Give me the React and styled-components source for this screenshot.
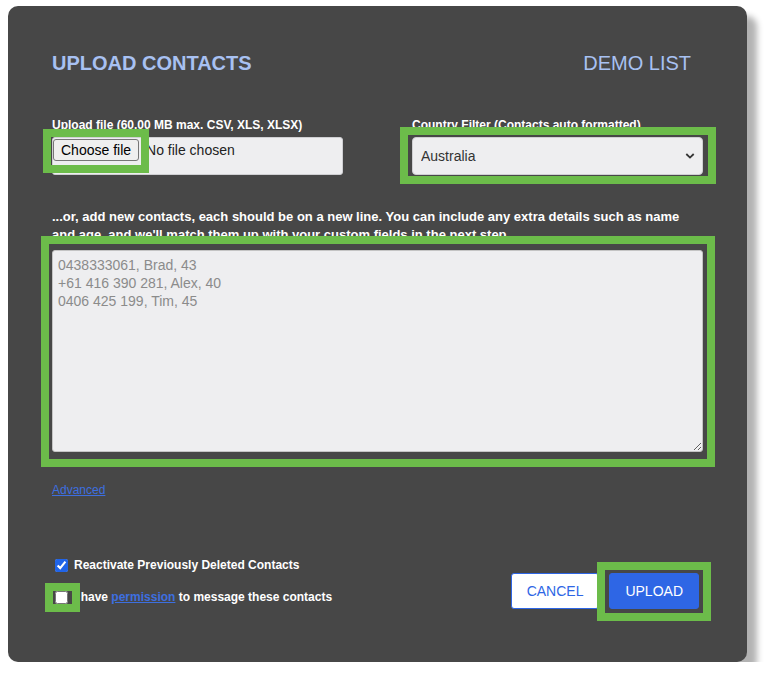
import React from 'react';
import styled, { createGlobalStyle } from 'styled-components';

const GlobalStyle = createGlobalStyle`
  body {
    margin: 0;
    background: #ffffff;
    font-family: "Liberation Sans", Arial, sans-serif;
  }
`;

const contactsPlaceholder = '0438333061, Brad, 43\n+61 416 390 281, Alex, 40\n0406 425 199, Tim, 45';

const App = () => {
  return (
    <Page>
      <GlobalStyle />
      <Modal>
        <Header>
          <Title>UPLOAD CONTACTS</Title>
          <ListName>DEMO LIST</ListName>
        </Header>

        <FieldGrid>
          <Field>
            <Label>Upload file (60.00 MB max. CSV, XLS, XLSX)</Label>
            <FileBox>
              <Highlight $inset="-10px -10px -12px -10px">
                <ChooseButton type="button">Choose file</ChooseButton>
              </Highlight>
              <FileStatus>No file chosen</FileStatus>
            </FileBox>
          </Field>
          <Field>
            <Label>Country Filter (Contacts auto formatted)</Label>
            <Highlight $block $inset="-10px -13px -9px -12px">
              <Select defaultValue="au">
                <option value="au">Australia</option>
                <option value="nz">New Zealand</option>
                <option value="uk">United Kingdom</option>
              </Select>
              <Chevron width="10" height="7" viewBox="0 0 10 7">
                <path d="M1.3 1.5 L5 5.1 L8.7 1.5" fill="none" stroke="#333" strokeWidth="1.8" />
              </Chevron>
            </Highlight>
          </Field>
        </FieldGrid>

        <Intro>
          ...or, add new contacts, each should be on a new line. You can include any extra details such as name
          and age, and we'll match them up with your custom fields in the next step.
        </Intro>
        <Highlight $block $inset="-14px -12px -15px -11px">
          <ContactsArea placeholder={contactsPlaceholder} />
        </Highlight>

        <AdvancedLink href="#">Advanced</AdvancedLink>

        <Footer>
          <CheckList>
            <CheckRow>
              <Checkbox type="checkbox" defaultChecked />
              Reactivate Previously Deleted Contacts
            </CheckRow>
            <CheckRow>
              <Highlight $inset="-8px -12px -8px -10px">
                <Checkbox type="checkbox" />
              </Highlight>
              <span>
                I have <InlineLink href="#">permission</InlineLink> to message these contacts
              </span>
            </CheckRow>
          </CheckList>
          <Actions>
            <ActionButton type="button">CANCEL</ActionButton>
            <Highlight $inset="-11px -12px -12px -12px">
              <ActionButton type="button" $primary>UPLOAD</ActionButton>
            </Highlight>
          </Actions>
        </Footer>
      </Modal>
    </Page>
  );
};

export default App;

const Page = styled.div`
  padding: 6px 0 0 8px;
`;

const Modal = styled.div`
  width: 739px;
  height: 656px;
  box-sizing: border-box;
  padding: 46px 44px 53px;
  background: #474747;
  border-radius: 10px;
  box-shadow: 10px 10px 6px rgba(0, 0, 0, 0.3);
  display: flex;
  flex-direction: column;
`;

// green annotation frame drawn over a control
const Highlight = styled.span`
  position: relative;
  display: ${({ $block }) => ($block ? 'block' : 'inline-flex')};

  &::after {
    content: '';
    position: absolute;
    inset: ${({ $inset }) => $inset};
    border: 8px solid #6cbc4a;
    pointer-events: none;
    z-index: 1;
  }
`;

const Header = styled.div`
  display: flex;
  justify-content: space-between;
  align-items: baseline;
  margin-bottom: 43px;
`;

const Title = styled.h1`
  margin: 0;
  font-size: 20px;
  line-height: 23px;
  font-weight: 700;
  color: #a8c1f2;
`;

const ListName = styled.div`
  font-size: 20px;
  line-height: 23px;
  color: #a8c1f2;
  padding-right: 12px;
`;

const FieldGrid = styled.div`
  display: grid;
  grid-template-columns: 1fr 1fr;
  column-gap: 69px;
`;

const Field = styled.div`
  display: flex;
  flex-direction: column;
`;

const Label = styled.label`
  font-size: 12px;
  line-height: 14px;
  font-weight: 700;
  color: #ffffff;
  margin-bottom: 5px;
`;

const FileBox = styled.div`
  height: 38px;
  box-sizing: border-box;
  background: #eeeef0;
  border: 1px solid #cfcfd2;
  border-radius: 3px;
  padding-top: 1px;
  display: flex;
  align-items: flex-start;
  gap: 7px;
`;

const ChooseButton = styled.button`
  height: 22px;
  padding: 0 7px;
  font-family: inherit;
  font-size: 14px;
  color: #000000;
  background: #efefef;
  border: 1px solid #767676;
  border-radius: 3px;
`;

const FileStatus = styled.span`
  font-size: 14px;
  line-height: 22px;
  color: #222222;
`;

const Select = styled.select`
  appearance: none;
  display: block;
  width: 100%;
  height: 38px;
  box-sizing: border-box;
  padding: 0 30px 0 8px;
  font-family: inherit;
  font-size: 14px;
  color: #333333;
  background: #eeeef0;
  border: 1px solid #cfcfd2;
  border-radius: 4px;
`;

const Chevron = styled.svg`
  position: absolute;
  right: 8px;
  top: 50%;
  transform: translateY(-50%);
  pointer-events: none;
`;

const Intro = styled.p`
  margin: 33px 0 6px;
  font-size: 13px;
  line-height: 18px;
  font-weight: 700;
  color: #ffffff;
`;

const ContactsArea = styled.textarea`
  display: block;
  width: 100%;
  height: 202px;
  box-sizing: border-box;
  padding: 5px;
  font-family: inherit;
  font-size: 14px;
  line-height: 18px;
  color: #333333;
  background: #eeeef0;
  border: 1px solid #c4c4c4;
  border-radius: 3px;
  resize: vertical;

  &::placeholder {
    color: #8b8b8b;
  }
`;

const AdvancedLink = styled.a`
  align-self: flex-start;
  margin-top: 31px;
  font-size: 12px;
  line-height: 14px;
  color: #3d6fe0;
  text-decoration: underline;
`;

const Footer = styled.div`
  margin-top: auto;
  display: flex;
  justify-content: space-between;
  align-items: flex-end;
`;

const CheckList = styled.div`
  display: flex;
  flex-direction: column;
  gap: 12px;
  margin: 0 0 2px 3px;
`;

const CheckRow = styled.label`
  display: flex;
  align-items: center;
  gap: 6px;
  height: 20px;
  font-size: 12px;
  font-weight: 700;
  color: #ffffff;
`;

const Checkbox = styled.input`
  width: 13px;
  height: 13px;
  margin: 0;
  accent-color: #2064e8;
`;

const InlineLink = styled.a`
  color: #3d6fe0;
  text-decoration: underline;
`;

const Actions = styled.div`
  display: flex;
  gap: 10px;
  margin-right: 4px;
`;

const ActionButton = styled.button`
  height: 36px;
  padding: 0 15px;
  font-family: inherit;
  font-size: 14px;
  border: 1px solid #2e66e5;
  border-radius: 3px;
  background: ${({ $primary }) => ($primary ? '#2e66e5' : '#ffffff')};
  color: ${({ $primary }) => ($primary ? '#ffffff' : '#2e66e5')};
`;
